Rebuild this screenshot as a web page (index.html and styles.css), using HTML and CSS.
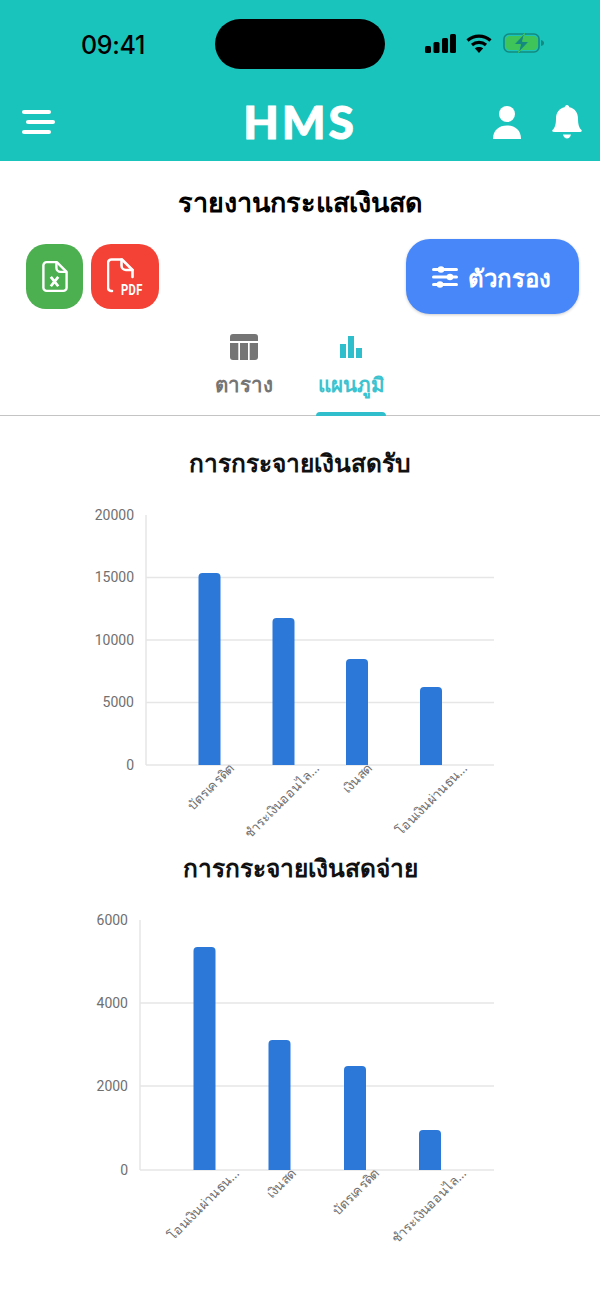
FILE: index.html
```html
<!DOCTYPE html>
<html lang="en">
<head>
    <meta charset="UTF-8">
    <meta name="viewport" content="width=device-width, initial-scale=1.0">
    <title>HMS - รายงานกระแสเงินสด</title>
    <link rel="stylesheet" href="styles.css">
</head>
<body>
    <div id="app">
        <div class="top-area">
            <div class="status-bar">
                <div class="clock">09:41</div>
                <div class="island"></div>
                <div class="status-icons">
                    <svg width="31" height="19" viewBox="0 0 31 19"><rect x="0" y="12" width="6" height="7" rx="1.5"/><rect x="8.5" y="8" width="6" height="11" rx="1.5"/><rect x="17" y="4" width="6" height="15" rx="1.5"/><rect x="25" y="0" width="6" height="19" rx="1.5"/></svg>
                    <svg width="26" height="19" viewBox="0 0 26 19" fill="none" stroke="#000" stroke-width="3.2"><path d="M1.5 6.5C8 .7 18 .7 24.500 6.500"/><path d="M6 11c4-3.400 10-3.400 14 0"/><path d="M13 19l-4.200-4.700c2.400-1.800 6-1.800 8.400 0z" fill="#000" stroke="none"/></svg>
                    <svg width="42" height="20" viewBox="0 0 42 20"><rect x="1" y="1" width="35" height="18" rx="5" fill="none" stroke="#14897f" stroke-width="1.600"/><rect x="3" y="3" width="31" height="14" rx="3.500" fill="#3fc45a"/><path d="M38 7c2 .5 3 1.500 3 3s-1 2.500-3 3z" fill="#14897f"/><path d="M21.500 0.500L11 11.500h6.500l-2 8 10.500-11h-6.500z" fill="#14897f" stroke="#3fc45a" stroke-width="1"/></svg>
                </div>
            </div>
            <div class="nav-bar">
                <svg class="menu-icon" width="33" height="24" viewBox="0 0 33 24" fill="#fff"><rect x="0" y="0" width="29" height="4" rx="2"/><rect x="4" y="10" width="29" height="4" rx="2"/><rect x="0" y="20" width="29" height="4" rx="2"/></svg>
                <div class="logo">HMS</div>
                <div class="nav-right">
                    <svg width="28" height="33" viewBox="0 0 28 33" fill="#fff"><circle cx="14" cy="8" r="8"/><path d="M0 33c0-9 6-13.500 14-13.500S28 24 28 33z"/></svg>
                    <svg width="30" height="34" viewBox="0 0 30 34" fill="#fff"><path d="M15 0c1.200 0 2.200 1 2.400 2.300C23 3.500 26 8 26 13.500c0 6 1 9 3.300 11.300.9 1 .4 2.200-.9 2.200H1.600C.3 27-.2 25.800.7 24.800 3 22.500 4 19.500 4 13.500 4 8 7 3.500 12.600 2.300 12.800 1 13.800 0 15 0z"/><path d="M11 29.500h8c-.6 2.500-2.200 4-4 4s-3.400-1.500-4-4z"/></svg>
                </div>
            </div>
        </div>

        <h1 class="page-title">รายงานกระแสเงินสด</h1>

        <div class="toolbar">
            <div class="export-buttons">
                <div class="export-btn excel">
                    <svg width="26" height="33" viewBox="0 0 28 34" fill="none" stroke="#fff" stroke-width="2.600" stroke-linejoin="round"><path d="M5 1.500h11l10.500 10.500v17a3.500 3.500 0 0 1-3.500 3.500H5A3.500 3.500 0 0 1 1.500 29V5A3.500 3.500 0 0 1 5 1.500z"/><path d="M15.500 1.500v6a4.500 4.500 0 0 0 4.500 4.500h6.500"/><path d="M9.500 17.500l8 10M17.500 17.500l-8 10" stroke-width="3"/></svg>
                </div>
                <div class="export-btn pdf">
                    <svg width="36" height="36" viewBox="0 0 36 36" fill="none" stroke="#fff" stroke-width="2.600" stroke-linejoin="round" stroke-linecap="round"><path d="M5 33H4.500A3.500 3.500 0 0 1 1 29.500V5A3.500 3.500 0 0 1 4.500 1.500h10.500L25.500 12v7"/><path d="M14.500 1.500v6A4.500 4.500 0 0 0 19 12h6.500"/></svg>
                    <span class="pdf-label">PDF</span>
                </div>
            </div>
            <div class="filter-btn">
                <svg width="26" height="22" viewBox="0 0 26 22" fill="#fff"><rect x="0" y="2" width="26" height="3" rx="1.500"/><rect x="0" y="9.500" width="26" height="3" rx="1.500"/><rect x="0" y="17" width="26" height="3" rx="1.500"/><circle cx="9" cy="3.500" r="3.300"/><circle cx="18" cy="11" r="3.300"/><circle cx="8" cy="18.500" r="3.300"/></svg>
                <span class="filter-label">ตัวกรอง</span>
            </div>
        </div>

        <div class="tabs">
            <div class="tab">
                <svg width="28" height="26" viewBox="0 0 28 26" fill="#757575"><path d="M3 0h22a3 3 0 0 1 3 3v4H0V3a3 3 0 0 1 3-3z"/><path d="M0 9h8.300v17H3a3 3 0 0 1-3-3z"/><rect x="10" y="9" width="8" height="17"/><path d="M19.700 9H28v14a3 3 0 0 1-3 3h-5.300z"/></svg>
                <span class="tab-label">ตาราง</span>
            </div>
            <div class="tab active">
                <svg width="22" height="26" viewBox="0 -2 22 26" fill="#2fbfcc"><rect x="0" y="8" width="6" height="14"/><rect x="8" y="0" width="6" height="22"/><rect x="16" y="12" width="6" height="10"/></svg>
                <span class="tab-label">แผนภูมิ</span>
            </div>
        </div>

        <section class="chart-section first">
            <h2 class="chart-title">การกระจายเงินสดรับ</h2>
            <svg class="chart" width="600" height="320" viewBox="0 0 600 320">
                <g class="grid">
                    <line x1="146" y1="2" x2="146" y2="252"/>
                    <line x1="146" y1="64.500" x2="494" y2="64.500"/>
                    <line x1="146" y1="127" x2="494" y2="127"/>
                    <line x1="146" y1="189.500" x2="494" y2="189.500"/>
                    <line x1="146" y1="252" x2="494" y2="252"/>
                </g>
                <g class="y-labels">
                    <text x="134" y="7">20000</text>
                    <text x="134" y="69">15000</text>
                    <text x="134" y="132">10000</text>
                    <text x="134" y="194">5000</text>
                    <text x="134" y="257">0</text>
                </g>
                <g class="bars">
                    <path d="M198.500 252V64a4 4 0 0 1 4-4h14a4 4 0 0 1 4 4v188z"/>
                    <path d="M272.500 252V109a4 4 0 0 1 4-4h14a4 4 0 0 1 4 4v143z"/>
                    <path d="M346 252V150a4 4 0 0 1 4-4h14a4 4 0 0 1 4 4v102z"/>
                    <path d="M420 252V178a4 4 0 0 1 4-4h14a4 4 0 0 1 4 4v74z"/>
                </g>
                <g class="x-labels">
                    <text transform="translate(235 256) rotate(-45)">บัตรเครดิต</text>
                    <text transform="translate(320 256) rotate(-45)">ชำระเงินออนไล...</text>
                    <text transform="translate(373 256) rotate(-45)">เงินสด</text>
                    <text transform="translate(468 256) rotate(-45)">โอนเงินผ่านธน...</text>
                </g>
            </svg>
        </section>

        <section class="chart-section">
            <h2 class="chart-title">การกระจายเงินสดจ่าย</h2>
            <svg class="chart" width="600" height="320" viewBox="0 0 600 320">
                <g class="grid">
                    <line x1="140" y1="3" x2="140" y2="253"/>
                    <line x1="140" y1="86" x2="494" y2="86"/>
                    <line x1="140" y1="169" x2="494" y2="169"/>
                    <line x1="140" y1="253" x2="494" y2="253"/>
                </g>
                <g class="y-labels">
                    <text x="128" y="8">6000</text>
                    <text x="128" y="91">4000</text>
                    <text x="128" y="174">2000</text>
                    <text x="128" y="258">0</text>
                </g>
                <g class="bars">
                    <path d="M193.500 253V34a4 4 0 0 1 4-4h14a4 4 0 0 1 4 4v219z"/>
                    <path d="M268.500 253V127a4 4 0 0 1 4-4h14a4 4 0 0 1 4 4v126z"/>
                    <path d="M344 253V153a4 4 0 0 1 4-4h14a4 4 0 0 1 4 4v100z"/>
                    <path d="M419 253V217a4 4 0 0 1 4-4h14a4 4 0 0 1 4 4v36z"/>
                </g>
                <g class="x-labels">
                    <text transform="translate(240 257) rotate(-45)">โอนเงินผ่านธน...</text>
                    <text transform="translate(297 257) rotate(-45)">เงินสด</text>
                    <text transform="translate(380 257) rotate(-45)">บัตรเครดิต</text>
                    <text transform="translate(467 257) rotate(-45)">ชำระเงินออนไล...</text>
                </g>
            </svg>
        </section>
    </div>
</body>
</html>
```

FILE: styles.css
```css
* {
    box-sizing: border-box;
}
body {
    margin: 0;
    background-color: white;
    font-family: 'Noto Sans', 'Roboto', 'DejaVu Sans', sans-serif;
}
#app {
    width: 600px;
    height: 1304px;
    overflow: hidden;
}
.top-area {
    background-color: #19c4bc;
    height: 161px;
}
.status-bar {
    display: flex;
    align-items: center;
    height: 90px;
    padding: 19px 55px 21px 81px;
}
.clock {
    width: 64px;
    font-family: 'Inter', sans-serif;
    font-size: 25px;
    font-weight: 500;
    letter-spacing: -0.3px;
    color: #000;
    margin-top: 1px;
}
.island {
    width: 171px;
    height: 50px;
    margin-left: 70px;
    background-color: #000;
    border-radius: 25px;
}
.status-icons {
    display: flex;
    align-items: center;
    gap: 10px;
    margin-left: 40px;
    margin-top: -2px;
}
.status-icons svg:last-child {
    margin-left: 1px;
}
.nav-bar {
    display: grid;
    grid-template-columns: 1fr auto 1fr;
    align-items: center;
    height: 71px;
    padding: 0 18px 7px 22px;
}
.menu-icon {
    justify-self: start;
}
.logo {
    font-family: 'Lato', sans-serif;
    font-size: 46px;
    font-weight: 900;
    letter-spacing: 3px;
    line-height: 1;
    color: white;
    -webkit-text-stroke: 1px white;
    margin-right: 4px;
}
.nav-right {
    display: flex;
    justify-content: flex-end;
    align-items: center;
    gap: 31px;
}
.page-title {
    margin: 0;
    padding-top: 20px;
    height: 78px;
    text-align: center;
    font-size: 27px;
    line-height: 42px;
    font-weight: 700;
    color: #000;
}
.toolbar {
    display: flex;
    justify-content: space-between;
    align-items: flex-start;
    padding: 0 21px 0 26px;
}
.export-buttons {
    display: flex;
    gap: 8px;
    margin-top: 5px;
}
.export-btn {
    position: relative;
    display: flex;
    justify-content: center;
    align-items: center;
    height: 65px;
    border-radius: 20px;
}
.excel {
    width: 57px;
    background-color: #4caf50;
}
.pdf {
    width: 68px;
    background-color: #f44336;
    padding-bottom: 1px;
}
.pdf-label {
    position: absolute;
    left: 30px;
    top: 38px;
    font-family: 'Roboto', sans-serif;
    font-size: 14px;
    font-weight: 700;
    letter-spacing: 0.5px;
    line-height: 16px;
    color: white;
    transform: scaleX(0.8);
    transform-origin: left center;
}
.filter-btn {
    display: flex;
    align-items: center;
    justify-content: center;
    gap: 10px;
    width: 173px;
    height: 75px;
    padding-right: 2px;
    background-color: #4787fa;
    border-radius: 24px;
    box-shadow: 0 1px 3px rgba(0,0,0,0.2);
    color: white;
    font-size: 24px;
    font-weight: 600;
}
.filter-label {
    margin-top: 4px;
}
.tabs {
    display: flex;
    justify-content: center;
    gap: 37px;
    height: 102px;
    border-bottom: 1px solid #c4c4c4;
    padding: 20px 5px 0 0;
}
.tab {
    position: relative;
    display: flex;
    flex-direction: column;
    align-items: center;
    width: 70px;
    color: #757575;
}
.tab.active {
    color: #3cc3cf;
}
.tab.active::after {
    content: '';
    position: absolute;
    left: 0;
    right: 0;
    bottom: -1px;
    height: 4px;
    background-color: #2fbfcc;
    border-radius: 4px 4px 0 0;
}
.tab-label {
    font-size: 20.5px;
    font-weight: 600;
    line-height: 30px;
    margin-top: 9px;
}
.chart-section {
    display: flex;
    flex-direction: column;
    align-items: center;
    height: 405px;
}
.chart-section.first {
    padding-top: 29px;
    height: 434px;
}
.chart-title {
    margin: 0;
    height: 67px;
    font-size: 24.5px;
    line-height: 36px;
    font-weight: 700;
    color: #111;
}
.first .chart-title {
    height: 68px;
}
.chart {
    display: block;
    flex: none;
    overflow: visible;
}
.grid line {
    stroke: #e6e6e6;
    stroke-width: 1.500;
}
.y-labels text {
    font-family: 'Roboto', sans-serif;
    font-size: 14px;
    fill: #707070;
    text-anchor: end;
}
.bars path {
    fill: #2b78d8;
}
.x-labels text {
    font-size: 13px;
    fill: #707070;
    text-anchor: end;
}
```
